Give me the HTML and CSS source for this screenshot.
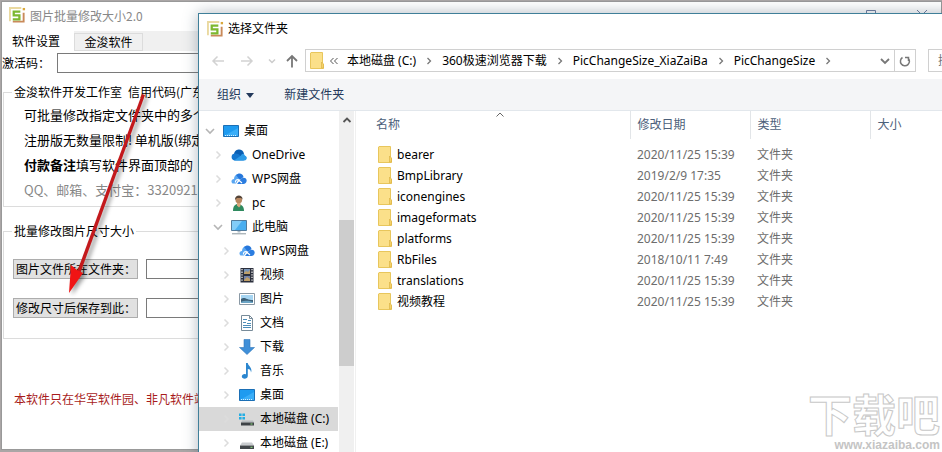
FILE: index.html
```html
<!DOCTYPE html>
<html lang="zh-CN">
<head>
<meta charset="UTF-8" />
<meta name="viewport" content="width=device-width, initial-scale=1" />
<title>选择文件夹</title>
<link rel="stylesheet" href="styles.css">
</head>
<body>
<svg class="sprite" aria-hidden="true">
    <symbol id="logo" viewBox="0 0 18 18">
        <path d="M1 15V1h12" fill="none" stroke="#ead9a0" stroke-width="2"/>
        <path d="M15.500 6v9.500H4" fill="none" stroke="#c98a5a" stroke-width="2"/>
        <path d="M14.500 1h2.500v2.500h-2.500z" fill="#d9a83c"/>
        <path d="M12 5H5v3.800h6V13H4" fill="none" stroke="#7cb82f" stroke-width="2.400"/>
    </symbol>
    <symbol id="folder" viewBox="0 0 14 17">
        <path d="M1 .5h11.500v11l1 1v4H.5V1z" fill="#fbe08a" stroke="#e8c65c"/>
        <path d="M11.500 16v-6l2 2v4z" fill="#f5d26a" stroke="#dcb548" stroke-width=".7"/>
    </symbol>
    <symbol id="open" viewBox="0 0 10 10">
        <path d="M1 3l4 4 4-4" fill="none" stroke="#b5b5b5" stroke-width="1.600"/>
    </symbol>
    <symbol id="closed" viewBox="0 0 10 10">
        <path d="M3.500 1.500l3.500 3.500-3.500 3.500" fill="none" stroke="#dcdcdc" stroke-width="1.500"/>
    </symbol>
    <symbol id="crumb" viewBox="0 0 8 8">
        <path d="M2.500 1l3 3-3 3" fill="none" stroke="#777" stroke-width="1.300"/>
    </symbol>
    <symbol id="desktop" viewBox="0 0 16 16">
        <path d="M.5 2.500h15v11H.5z" fill="#1e9bf0" stroke="#1b6fb5"/>
        <path d="M1 13L15 5v8z" fill="#3aaef8"/>
        <path d="M2 12.500h12" stroke="#d6efff" stroke-dasharray="1 1"/>
    </symbol>
    <symbol id="onedrive" viewBox="0 0 16 16">
        <path d="M3 8a5 5 0 0 1 10-1L9 11z" fill="#0a5fb4"/>
        <path d="M3.500 13.500A3.500 3.500 0 0 1 3.500 6.600c2-.6 4.500.4 5.500 2l4 4.900z" fill="#1577cf"/>
        <path d="M3 13.500l7-5c1-2 3.500-1.800 4 .2 2.500.6 2.500 4.500-.5 4.800z" fill="#2d9be8"/>
    </symbol>
    <symbol id="wps" viewBox="0 0 16 16">
        <path d="M1.500 12.500C-.5 11 .6 8 3 8c0-4 4-6 7-3.800l-5 8.300z" fill="#5aa7f2"/>
        <path d="M5 4c3-3 7-1.500 7.500 2L9 9z" fill="#2677db"/>
        <path d="M6 13l4-5c3-3 6.500-.5 5.500 2.500-.4 1.500-1.500 2.500-3 2.500z" fill="#2b7de0"/>
        <path d="M4.500 11.500C4 9.500 6 8 7.500 9l3.500 3" fill="none" stroke="#fff" stroke-width="1.200"/>
    </symbol>
    <symbol id="user" viewBox="0 0 16 16">
        <path d="M2 16c0-5 2-7 5-7s6 2 6 7z" fill="#2f8a5f"/>
        <path d="M6 8h3.500v3L8 12.500 6 10.500z" fill="#d9a77c"/>
        <circle cx="7.800" cy="5" r="3.300" fill="#b98861"/>
        <path d="M4 5C3.500-1 12-1 11.500 4.500L10 3H6z" fill="#544437"/>
    </symbol>
    <symbol id="computer" viewBox="0 0 16 16">
        <path d="M.5 1.500h15v10H.5z" fill="#49aef0" stroke="#527b9c"/>
        <path d="M1 2h10L4 11H1z" fill="#82ccf8"/>
        <path d="M6.500 12h3v1.500h-3z" fill="#aebcc6"/>
        <path d="M1 14.800h14" stroke="#8a979f"/>
    </symbol>
    <symbol id="video" viewBox="0 0 16 16">
        <path d="M1.500 1h13v14.500h-13z" fill="#2b2f3c"/>
        <path d="M3 2v13M13 2v13" stroke="#e8e8e8" stroke-width="1.300" stroke-dasharray="1.300 1.300"/>
        <path d="M5 2h6v5H5z" fill="#7894b8"/>
        <path d="M5 9h6v5H5z" fill="#7482a8"/>
        <path d="M5 6l2-2 2 1 2-2v4H5zM5 13l3-3 3 2v2H5z" fill="#c09f68"/>
    </symbol>
    <symbol id="picture" viewBox="0 0 16 16">
        <path d="M.5 2.500h15v11H.5z" fill="#fff" stroke="#8a99a5"/>
        <path d="M2 4h12v8H2z" fill="#a6d5f2"/>
        <path d="M2 8c4-3 5 1 12 1v3H2z" fill="#3d5f76"/>
        <path d="M2 11c5-2 8-1 12 0v1H2z" fill="#6ca5c5"/>
    </symbol>
    <symbol id="document" viewBox="0 0 16 16">
        <path d="M2.500.5h8l3 3v12h-11z" fill="#fff" stroke="#788b99"/>
        <path d="M4 4.500h4M9 5.500h3M4 7.500h3M8 8.500h4M4 10.500h8M4 12.500h8" stroke="#4c8db8"/>
        <path d="M10.500.5v3h3" fill="none" stroke="#788b99"/>
    </symbol>
    <symbol id="download" viewBox="0 0 16 16">
        <path d="M5 .5h6v8h4.500L8 15.500.5 8.500H5z" fill="#3f8fd8" stroke="#3077ba" stroke-width=".6"/>
    </symbol>
    <symbol id="music" viewBox="0 0 16 16">
        <path d="M7 0h1.800c.2 3 5 4.500 3.200 9.500C12 7 10.500 6 8.800 6v7c0 3.500-6 3.500-6 .6 0-2 2.200-3 4.200-2.200z" fill="#2b86cf"/>
    </symbol>
    <symbol id="windisk" viewBox="0 0 16 16">
        <path d="M0 2.500h2.600v2.600H0zM3.400 2.500H6v2.600H3.400zM0 6h2.600v2.600H0zM3.400 6H6v2.600H3.400z" fill="#24aee4"/>
        <path d="M3 9.500h11l1 2H2z" fill="#b7bcbf"/>
        <path d="M2 11.500h13v3H2z" fill="#3e4347"/>
        <path d="M11.500 13h2" stroke="#8be07a"/>
    </symbol>
    <symbol id="disk" viewBox="0 0 16 16">
        <path d="M3 7.500h10l2 3H1z" fill="#c9cccf"/>
        <path d="M1 10.500h14v3.500H1z" fill="#43474b"/>
        <path d="M11.500 12.300h2" stroke="#8be07a"/>
    </symbol>
</svg>

<main class="screen">
    <section class="app-window">
        <header class="app-title">
            <svg class="logo"><use href="#logo"/></svg>
            <h1>图片批量修改大小2.0</h1>
            <svg class="window-controls" viewBox="0 0 62 14">
                <path d="M.5 11V1.500h9V11M51 1l10 10M61 1L51 11" fill="none" stroke="#6f7da0"/>
            </svg>
        </header>
        <nav class="tabs">
            <button class="tab active">软件设置</button>
            <button class="tab">金浚软件</button>
        </nav>
        <div class="code-row">
            <label for="code">激活码：</label>
            <input id="code" type="text">
        </div>
        <fieldset class="info">
            <legend>金浚软件开发工作室&ensp;信用代码(广东</legend>
            <p>可批量修改指定文件夹中的多个</p>
            <p>注册版无数量限制!&thinsp;单机版(绑定</p>
            <p><b>付款备注</b>填写软件界面顶部的</p>
            <p class="contact">QQ、邮箱、支付宝：33209213</p>
        </fieldset>
        <fieldset class="resize">
            <legend>批量修改图片尺寸大小</legend>
            <div class="path-row">
                <button id="sourceBtn">图片文件所在文件夹：</button>
                <input type="text" aria-labelledby="sourceBtn">
            </div>
            <div class="path-row">
                <button id="targetBtn">修改尺寸后保存到此：</button>
                <input type="text" aria-labelledby="targetBtn">
            </div>
        </fieldset>
        <p class="notice">本软件只在华军软件园、非凡软件站</p>
    </section>

    <svg class="pointer" viewBox="0 0 90 210">
        <path d="M82 4L85 5 20 184 17 182z" fill="#c3191c"/>
        <path d="M9 203L11 175 17 180 23 183z" fill="#f01414"/>
    </svg>

    <section class="dialog">
        <header class="dialog-title">
            <svg class="logo"><use href="#logo"/></svg>
            <h2>选择文件夹</h2>
        </header>
        <div class="nav-row">
            <button class="nav-btn" aria-label="后退"><svg viewBox="0 0 14 14"><path d="M13 7H2M6.500 2.500L2 7l4.500 4.500" fill="none" stroke="#d2d2d2" stroke-width="1.500"/></svg></button>
            <button class="nav-btn" aria-label="前进"><svg viewBox="0 0 14 14"><path d="M1 7h11M7.500 2.500L12 7l-4.500 4.500" fill="none" stroke="#d2d2d2" stroke-width="1.500"/></svg></button>
            <button class="nav-btn small" aria-label="历史"><svg viewBox="0 0 10 10"><path d="M2 3.500l3 3 3-3" fill="none" stroke="#ccc" stroke-width="1.500"/></svg></button>
            <button class="nav-btn" aria-label="上移"><svg viewBox="0 0 14 14"><path d="M7 13.500V2M2 7l5-5 5 5" fill="none" stroke="#777" stroke-width="1.800"/></svg></button>
            <div class="address">
                <svg class="folder"><use href="#folder"/></svg>
                <svg class="more" viewBox="0 0 10 8"><path d="M4.500 1l-3 3 3 3M8.500 1l-3 3 3 3" fill="none" stroke="#555"/></svg>
                <button>本地磁盘 (C:)</button>
                <svg class="crumb"><use href="#crumb"/></svg>
                <button>360极速浏览器下载</button>
                <svg class="crumb"><use href="#crumb"/></svg>
                <button>PicChangeSize_XiaZaiBa</button>
                <svg class="crumb"><use href="#crumb"/></svg>
                <button>PicChangeSize</button>
                <svg class="crumb"><use href="#crumb"/></svg>
                <button class="drop" aria-label="展开"><svg viewBox="0 0 10 10"><path d="M1 3l4 4 4-4" fill="none" stroke="#777" stroke-width="1.800"/></svg></button>
                <button class="refresh" aria-label="刷新"><svg viewBox="0 0 12 12"><path d="M3.500 2.500A4.500 4.500 0 1 0 9 3M9.500 6V2.500H6" fill="none" stroke="#777" stroke-width="1.500"/></svg></button>
            </div>
            <input class="search" type="search" placeholder="搜索" aria-label="搜索">
        </div>
        <div class="toolbar">
            <button>组织 <span class="caret"></span></button>
            <button>新建文件夹</button>
        </div>
        <div class="panes">
            <ul class="tree">
                <li><svg class="arrow"><use href="#open"/></svg><svg class="icon"><use href="#desktop"/></svg>桌面</li>
                <li class="level-1"><svg class="arrow"><use href="#closed"/></svg><svg class="icon"><use href="#onedrive"/></svg>OneDrive</li>
                <li class="level-1"><svg class="arrow"><use href="#closed"/></svg><svg class="icon"><use href="#wps"/></svg>WPS网盘</li>
                <li class="level-1"><svg class="arrow"><use href="#closed"/></svg><svg class="icon"><use href="#user"/></svg>pc</li>
                <li class="level-1"><svg class="arrow"><use href="#open"/></svg><svg class="icon"><use href="#computer"/></svg>此电脑</li>
                <li class="level-2"><svg class="arrow"><use href="#closed"/></svg><svg class="icon"><use href="#wps"/></svg>WPS网盘</li>
                <li class="level-2"><svg class="arrow"><use href="#closed"/></svg><svg class="icon"><use href="#video"/></svg>视频</li>
                <li class="level-2"><svg class="arrow"><use href="#closed"/></svg><svg class="icon"><use href="#picture"/></svg>图片</li>
                <li class="level-2"><svg class="arrow"><use href="#closed"/></svg><svg class="icon"><use href="#document"/></svg>文档</li>
                <li class="level-2"><svg class="arrow"><use href="#closed"/></svg><svg class="icon"><use href="#download"/></svg>下载</li>
                <li class="level-2"><svg class="arrow"><use href="#closed"/></svg><svg class="icon"><use href="#music"/></svg>音乐</li>
                <li class="level-2"><svg class="arrow"><use href="#closed"/></svg><svg class="icon"><use href="#desktop"/></svg>桌面</li>
                <li class="level-2 selected"><svg class="arrow"><use href="#closed"/></svg><svg class="icon"><use href="#windisk"/></svg>本地磁盘 (C:)</li>
                <li class="level-2"><svg class="arrow"><use href="#closed"/></svg><svg class="icon"><use href="#disk"/></svg>本地磁盘 (E:)</li>
            </ul>
            <div class="scrollbar">
                <svg viewBox="0 0 10 10"><path d="M1.500 7L5 3.500 8.500 7" fill="none" stroke="#555" stroke-width="1.800"/></svg>
                <div class="thumb"></div>
            </div>
            <div class="files">
                <table>
                    <thead>
                        <tr>
                            <th class="name">名称<svg class="sort" viewBox="0 0 8 5"><path d="M.5 4.500L4 1l3.500 3.500" fill="none" stroke="#666"/></svg></th>
                            <th class="date">修改日期</th>
                            <th class="type">类型</th>
                            <th>大小</th>
                        </tr>
                    </thead>
                    <tbody>
                        <tr><td><svg class="folder"><use href="#folder"/></svg>bearer</td><td>2020/11/25 15:39</td><td>文件夹</td><td></td></tr>
                        <tr><td><svg class="folder"><use href="#folder"/></svg>BmpLibrary</td><td>2019/2/9 17:35</td><td>文件夹</td><td></td></tr>
                        <tr><td><svg class="folder"><use href="#folder"/></svg>iconengines</td><td>2020/11/25 15:39</td><td>文件夹</td><td></td></tr>
                        <tr><td><svg class="folder"><use href="#folder"/></svg>imageformats</td><td>2020/11/25 15:39</td><td>文件夹</td><td></td></tr>
                        <tr><td><svg class="folder"><use href="#folder"/></svg>platforms</td><td>2020/11/25 15:39</td><td>文件夹</td><td></td></tr>
                        <tr><td><svg class="folder"><use href="#folder"/></svg>RbFiles</td><td>2018/10/11 7:49</td><td>文件夹</td><td></td></tr>
                        <tr><td><svg class="folder"><use href="#folder"/></svg>translations</td><td>2020/11/25 15:39</td><td>文件夹</td><td></td></tr>
                        <tr><td><svg class="folder"><use href="#folder"/></svg>视频教程</td><td>2020/11/25 15:39</td><td>文件夹</td><td></td></tr>
                    </tbody>
                </table>
            </div>
        </div>
    </section>

    <div class="watermark">
        <span class="mark-name">下载吧</span>
        <span class="mark-url">www.xiazaiba.com</span>
    </div>
</main>
</body>
</html>
```
FILE: styles.css
```css
* {
    box-sizing: border-box;
}
html, body {
    margin: 0;
    height: 100%;
    overflow: hidden;
    font-family: "Noto Sans", "Noto Sans CJK SC", sans-serif;
    font-size: 12px;
    line-height: 20px;
    color: #000;
}
h1, h2, p, ul {
    margin: 0;
    padding: 0;
    font-size: 12px;
    font-weight: normal;
}
button, input {
    margin: 0;
    font: inherit;
    color: inherit;
}
button {
    padding: 0;
    border: none;
    background: none;
    white-space: nowrap;
}
svg {
    display: block;
    flex: none;
}
.sprite {
    position: absolute;
    width: 0;
    height: 0;
}
.screen {
    position: relative;
    height: 100%;
    overflow: hidden;
    background: #aaa6a6;
}
.logo {
    width: 17px;
    height: 17px;
}
.folder {
    width: 14px;
    height: 17px;
}

/* main program window */
.app-window {
    position: absolute;
    top: 1px;
    left: 1px;
    right: 0;
    bottom: 2px;
    border: 1px solid #999;
    background: #fff;
    font-family: "Noto Sans CJK SC", sans-serif;
    white-space: nowrap;
    overflow: hidden;
}
.app-title {
    display: flex;
    align-items: center;
    gap: 4px;
    height: 29px;
    padding: 0 13px 2px 7px;
}
.app-title h1 {
    color: #888;
}
.window-controls {
    width: 62px;
    height: 14px;
    margin-left: auto;
}
.tabs {
    display: flex;
    align-items: flex-end;
    height: 20px;
    background: #f0f0f0;
}
.tab {
    width: 69px;
    height: 18px;
    line-height: 16px;
    border: 1px solid #dcdcdc;
}
.tab.active {
    width: 72px;
    height: 20px;
    padding-right: 4px;
    border: none;
    background: #fff;
}
.code-row {
    display: flex;
    gap: 7px;
    padding-top: 2px;
}
.app-window input {
    height: 20px;
    border: 1px solid #7a7a7a;
    background: #fff;
}
.code-row input {
    flex: 1;
}
.app-window fieldset {
    margin: 0 10px 0 1px;
    padding: 0 9px;
    border: 1px solid #dcdcdc;
}
.app-window legend {
    margin-left: -1px;
    padding: 0 2px;
}
.app-window .info {
    margin-top: 9px;
    padding-bottom: 4px;
}
.info p {
    padding-left: 11px;
    font-size: 13px;
    line-height: 25px;
}
.info .contact {
    color: #888;
}
.app-window .resize {
    margin-top: 14px;
    padding-bottom: 20px;
}
.path-row {
    display: flex;
    gap: 8px;
    margin-top: 18px;
}
.path-row + .path-row {
    margin-top: 19px;
}
.path-row button {
    width: 125px;
    height: 20px;
    padding-left: 2px;
    line-height: 18px;
    text-align: left;
    border: 1px solid #adadad;
    background: #e1e1e1;
}
.path-row input {
    flex: 1;
}
.notice {
    margin-top: 50px;
    padding-left: 12px;
    color: #a81c1c;
}

/* red arrow drawn over the program window */
.pointer {
    position: absolute;
    left: 60px;
    top: 90px;
    width: 90px;
    height: 210px;
    filter: drop-shadow(3px 2px 2px rgba(0, 0, 0, 0.4));
}

/* folder picker */
.dialog {
    position: absolute;
    top: 13px;
    left: 198px;
    right: -200px;
    bottom: -40px;
    display: flex;
    flex-direction: column;
    border: 1px solid #3f7f99;
    background: #fff;
    box-shadow: 0 0 14px rgba(60, 80, 100, 0.4);
}
.dialog-title {
    display: flex;
    align-items: center;
    gap: 4px;
    height: 30px;
    padding-left: 8px;
}
.nav-row {
    display: flex;
    align-items: center;
    height: 35px;
    padding: 0 10px 2px 12px;
}
.nav-btn {
    width: 14px;
    margin-right: 15px;
}
.nav-btn svg {
    width: 14px;
    height: 14px;
}
.nav-btn.small {
    width: 10px;
    margin-right: 8px;
    margin-left: -2px;
}
.nav-btn.small svg {
    width: 10px;
    height: 10px;
}
.nav-row .nav-btn:nth-child(4) {
    margin-right: 6px;
}
.address {
    flex: 1;
    display: flex;
    align-items: center;
    height: 23px;
    padding-left: 4px;
    border: 1px solid #d0d0d0;
}
.more {
    width: 10px;
    height: 8px;
    margin: 0 8px 0 5px;
}
.crumb {
    width: 8px;
    height: 8px;
    margin: 0 9px;
}
.drop {
    margin-left: auto;
    padding: 0 4px;
}
.drop svg {
    width: 10px;
    height: 10px;
}
.refresh {
    height: 21px;
    padding: 0 4px;
    border-left: 1px solid #d0d0d0;
}
.refresh svg {
    width: 12px;
    height: 12px;
}
.search {
    width: 203px;
    height: 23px;
    margin-left: 12px;
    padding: 0 9px;
    border: 1px solid #d0d0d0;
}
.toolbar {
    display: flex;
    align-items: center;
    gap: 30px;
    height: 32px;
    padding-left: 18px;
    border-bottom: 1px solid #e2e7ec;
    background: #f4f5f7;
    color: #23395b;
}
.caret {
    display: inline-block;
    margin-left: 2px;
    border: 4px solid transparent;
    border-top: 5px solid #23395b;
    border-bottom: 0;
    vertical-align: middle;
}
.panes {
    flex: 1;
    display: flex;
    overflow: hidden;
}
.tree {
    width: 139px;
    padding-top: 8px;
    list-style: none;
    white-space: nowrap;
}
.tree li {
    display: flex;
    align-items: center;
    height: 24px;
    padding-left: 6px;
}
.tree .level-1 {
    padding-left: 14px;
}
.tree .level-2 {
    padding-left: 22px;
}
.tree .selected {
    background: #d9d9d9;
}
.arrow {
    width: 10px;
    height: 10px;
    margin-right: 8px;
}
.icon {
    width: 16px;
    height: 16px;
    margin-right: 5px;
}
.scrollbar {
    width: 15px;
    margin-left: 1px;
    background: #f0f0f0;
}
.scrollbar svg {
    width: 10px;
    height: 10px;
    margin: 4px auto 0;
}
.thumb {
    height: 146px;
    margin-top: 95px;
    background: #cdcdcd;
}
.files {
    flex: 1;
    margin-left: 1px;
    padding-left: 13px;
    border-left: 1px solid #f0f0f0;
}
table {
    width: 100%;
    table-layout: fixed;
    border-collapse: collapse;
}
th, td {
    height: 21px;
    padding: 0 0 0 7px;
    font-weight: normal;
    text-align: left;
    line-height: 20px;
    color: #6d6d6d;
}
th {
    height: 28px;
    border-right: 1px solid #e2e5e8;
    color: #4c607a;
}
th:last-child {
    border-right: none;
}
.name {
    position: relative;
    width: 261px;
}
.date, .type {
    width: 120px;
}
.sort {
    position: absolute;
    top: 1px;
    left: calc(50% - 3px);
    width: 8px;
    height: 5px;
}
tbody::before {
    content: "";
    display: block;
    height: 5px;
}
td:first-child {
    padding-left: 9px;
    color: #000;
}
td .folder {
    float: left;
    margin: 1px 5px 0 0;
}

/* site mark in the lower right corner */
.watermark {
    position: absolute;
    right: 2px;
    bottom: 0;
    display: flex;
    flex-direction: column;
    align-items: flex-end;
    color: #fff;
    font-weight: bold;
}
.mark-name {
    font-size: 44px;
    line-height: 46px;
    -webkit-text-stroke: 1px #c8c8c8;
}
.mark-url {
    font-family: "Liberation Sans", sans-serif;
    font-size: 12px;
    line-height: 14px;
    color: #c4c4c4;
}
```
